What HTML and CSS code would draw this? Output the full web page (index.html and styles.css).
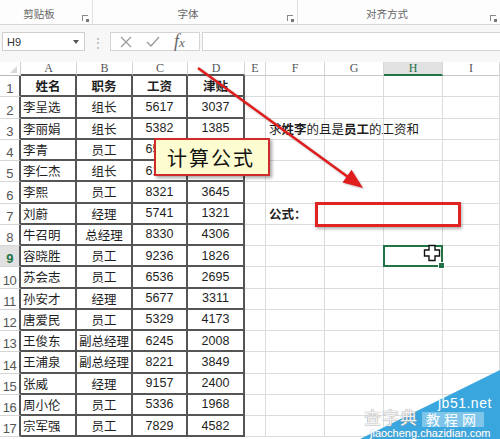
FILE: index.html
```html
<!DOCTYPE html>
<html lang="zh">
<head>
<meta charset="utf-8">
<title>Excel</title>
<link rel="stylesheet" href="styles.css">
</head>
<body>
<div class="ribbon">
  <div class="group g1">剪贴板<span class="launch"></span></div>
  <div class="group g2">字体<span class="launch"></span></div>
  <div class="group g3">对齐方式<span class="launch"></span></div>
</div>
<div class="fbar">
  <div class="namebox"><span>H9</span><span class="drop"></span></div>
  <div class="grip">⋮</div>
  <div class="fxbox">
    <svg class="ic" width="12" height="12" viewBox="0 0 12 12"><path d="M1 1L11 11M11 1L1 11" stroke="#9a9a9a" stroke-width="1.3" fill="none"/></svg>
    <svg class="ic" width="14" height="12" viewBox="0 0 14 12"><path d="M1 6L5 10L13 1" stroke="#9a9a9a" stroke-width="1.3" fill="none"/></svg>
    <span class="fx"><i>f</i><i class="x">x</i></span>
  </div>
  <div class="finput"></div>
</div>
<div class="sheet">
  <div class="corner"></div><div class="ch dk">A</div><div class="ch dk">B</div><div class="ch dk">C</div><div class="ch dk">D</div><div class="ch">E</div><div class="ch">F</div><div class="ch">G</div><div class="ch on">H</div><div class="ch">I</div>

  <div class="rh">1</div><div class="c t m b">姓名</div><div class="c t m b">职务</div><div class="c t m b">工资</div><div class="c t m b">津贴</div><div class="c"></div><div class="c"></div><div class="c"></div><div class="c"></div><div class="c"></div>
  <div class="rh">2</div><div class="c t l">李呈选</div><div class="c t m">组长</div><div class="c t m n">5617</div><div class="c t m n">3037</div><div class="c"></div><div class="c"></div><div class="c"></div><div class="c"></div><div class="c"></div>
  <div class="rh">3</div><div class="c t l">李丽娟</div><div class="c t m">组长</div><div class="c t m n">5382</div><div class="c t m n">1385</div><div class="c"></div><div class="c l note">求<b>姓李</b>的且是<b>员工</b>的工资和</div><div class="c"></div><div class="c"></div><div class="c"></div>
  <div class="rh">4</div><div class="c t l">李青</div><div class="c t m">员工</div><div class="c t m n">6514</div><div class="c t m n"></div><div class="c"></div><div class="c"></div><div class="c"></div><div class="c"></div><div class="c"></div>
  <div class="rh">5</div><div class="c t l">李仁杰</div><div class="c t m">组长</div><div class="c t m n">6108</div><div class="c t m n"></div><div class="c"></div><div class="c"></div><div class="c"></div><div class="c"></div><div class="c"></div>
  <div class="rh">6</div><div class="c t l">李熙</div><div class="c t m">员工</div><div class="c t m n">8321</div><div class="c t m n">3645</div><div class="c"></div><div class="c"></div><div class="c"></div><div class="c"></div><div class="c"></div>
  <div class="rh">7</div><div class="c t l">刘蔚</div><div class="c t m">经理</div><div class="c t m n">5741</div><div class="c t m n">1321</div><div class="c"></div><div class="c l note"><b>公式：</b></div><div class="c"></div><div class="c"></div><div class="c"></div>
  <div class="rh">8</div><div class="c t l">牛召明</div><div class="c t m">总经理</div><div class="c t m n">8330</div><div class="c t m n">4306</div><div class="c"></div><div class="c"></div><div class="c"></div><div class="c"></div><div class="c"></div>
  <div class="rh on">9</div><div class="c t l">容晓胜</div><div class="c t m">员工</div><div class="c t m n">9236</div><div class="c t m n">1826</div><div class="c"></div><div class="c"></div><div class="c"></div><div class="c sel"></div><div class="c"></div>
  <div class="rh">10</div><div class="c t l">苏会志</div><div class="c t m">员工</div><div class="c t m n">6536</div><div class="c t m n">2695</div><div class="c"></div><div class="c"></div><div class="c"></div><div class="c"></div><div class="c"></div>
  <div class="rh">11</div><div class="c t l">孙安才</div><div class="c t m">经理</div><div class="c t m n">5677</div><div class="c t m n">3311</div><div class="c"></div><div class="c"></div><div class="c"></div><div class="c"></div><div class="c"></div>
  <div class="rh">12</div><div class="c t l">唐爱民</div><div class="c t m">员工</div><div class="c t m n">5329</div><div class="c t m n">4173</div><div class="c"></div><div class="c"></div><div class="c"></div><div class="c"></div><div class="c"></div>
  <div class="rh">13</div><div class="c t l">王俊东</div><div class="c t m">副总经理</div><div class="c t m n">6245</div><div class="c t m n">2008</div><div class="c"></div><div class="c"></div><div class="c"></div><div class="c"></div><div class="c"></div>
  <div class="rh">14</div><div class="c t l">王浦泉</div><div class="c t m">副总经理</div><div class="c t m n">8221</div><div class="c t m n">3849</div><div class="c"></div><div class="c"></div><div class="c"></div><div class="c"></div><div class="c"></div>
  <div class="rh">15</div><div class="c t l">张威</div><div class="c t m">经理</div><div class="c t m n">9157</div><div class="c t m n">2400</div><div class="c"></div><div class="c"></div><div class="c"></div><div class="c"></div><div class="c"></div>
  <div class="rh">16</div><div class="c t l">周小伦</div><div class="c t m">员工</div><div class="c t m n">5336</div><div class="c t m n">1968</div><div class="c"></div><div class="c"></div><div class="c"></div><div class="c"></div><div class="c"></div>
  <div class="rh">17</div><div class="c t l">宗军强</div><div class="c t m">员工</div><div class="c t m n">7829</div><div class="c t m n">4582</div><div class="c"></div><div class="c"></div><div class="c"></div><div class="c"></div><div class="c"></div>
</div>

<div class="callout">计算公式</div>
<div class="redbox"></div>

<svg class="arrow" width="500" height="439" viewBox="0 0 500 439">
  <line x1="198" y1="68" x2="348" y2="177" stroke="#e01e1e" stroke-width="2.6"/>
  <polygon points="363,188 342.5,182.5 351.5,169.8" fill="#e01e1e"/>
</svg>

<svg class="cursor" width="18" height="18" viewBox="0 0 18 18">
  <path d="M6 1.5H12V6H16.5V12H12V16.5H6V12H1.5V6H6Z" fill="#fff" stroke="#111" stroke-width="1.4"/>
</svg>

<div class="wm">
  <svg class="wm-bg" width="140" height="69" viewBox="0 0 140 69"><polygon points="0,69 140,0 140,69" fill="#39a6de"/></svg>
  <span class="wm-site">jb51.net</span>
  <span class="wm-cn">查字典</span>
  <span class="wm-jc">教程网</span>
  <span class="wm-url">jiaocheng.chazidian.com</span>
</div>
</body>
</html>
```
FILE: styles.css
```css
* { box-sizing: border-box; margin: 0; padding: 0; }
body {
  width: 500px;
  height: 439px;
  overflow: hidden;
  position: relative;
  background: #fff;
  font-family: "Noto Sans CJK SC", "Liberation Sans", sans-serif;
  color: #222;
}

/* ribbon */
.ribbon {
  height: 25px;
  display: grid;
  grid-template-columns: 93px 205px 202px;
  background: #fdfdfd;
  border-bottom: 1px solid #d8d8d8;
}
.group {
  position: relative;
  display: flex;
  justify-content: center;
  align-items: flex-end;
  padding: 0 14px 3px 0;
  font-size: 10.5px;
  color: #666;
  border-right: 1px solid #e0e0e0;
}
.g3 { padding-right: 24px; border-right: none; }
.launch {
  position: absolute;
  right: 4px;
  bottom: 3px;
  width: 6px;
  height: 6px;
  border-left: 1px solid #888;
  border-top: 1px solid #888;
}
.launch::after {
  content: "";
  position: absolute;
  right: -1px;
  bottom: -1px;
  width: 3px;
  height: 3px;
  background: #777;
}

/* formula bar */
.fbar {
  height: 37px;
  display: flex;
  align-items: flex-start;
  padding: 7px 0 0 2px;
  background: #f7f7f7;
}
.namebox {
  width: 83px;
  height: 19px;
  background: #fff;
  border: 1px solid #cfcfcf;
  display: flex;
  align-items: center;
  justify-content: space-between;
  padding: 0 5px 0 4px;
  font-family: "Liberation Sans", sans-serif;
  font-size: 11px;
  color: #333;
}
.drop {
  width: 0;
  height: 0;
  border-left: 3.5px solid transparent;
  border-right: 3.5px solid transparent;
  border-top: 4px solid #555;
}
.grip {
  width: 25px;
  text-align: center;
  color: #aaa;
  font-size: 12px;
  line-height: 19px;
}
.fxbox {
  width: 90px;
  height: 19px;
  background: #fff;
  border: 1px solid #d4d4d4;
  display: flex;
  align-items: center;
  gap: 14px;
  padding-left: 9px;
  margin-right: 2px;
}
.fx {
  font-family: "Liberation Serif", serif;
  font-size: 18px;
  color: #666;
  line-height: 1;
  margin-top: -2px;
}
.fx .x { font-size: 13px; }
.finput {
  flex: 1;
  height: 19px;
  background: #fff;
  border: 1px solid #d4d4d4;
  border-right: none;
}

/* sheet */
.sheet {
  display: grid;
  grid-template-columns: 21px 56px 56px 55px 57px 21px 59px 59px 59px 57px;
  grid-template-rows: 14px repeat(17, 21.25px);
}
.corner {
  position: relative;
  border-right: 1px solid #cfcfcf;
  border-bottom: 1px solid #b8b8b8;
  background: #fff;
}
.corner::after {
  content: "";
  position: absolute;
  right: 3px;
  bottom: 2px;
  border-left: 7px solid transparent;
  border-bottom: 7px solid #d8d8d8;
}
.ch {
  display: flex;
  justify-content: center;
  align-items: center;
  font-family: "Liberation Serif", serif;
  font-size: 12px;
  color: #555;
  border-right: 1px solid #d6d6d6;
  border-bottom: 1px solid #c8c8c8;
}
.ch.dk { border-bottom: 2px solid #555; }
.ch.on {
  background: #e1e1e1;
  color: #217346;
  border-bottom: 2px solid #217346;
}
.rh {
  display: flex;
  justify-content: center;
  align-items: flex-end;
  padding-bottom: 0;
  font-family: "Liberation Sans", sans-serif;
  font-size: 13px;
  color: #555;
  border-right: 2px solid #555;
  border-bottom: 1px solid #d6d6d6;
  letter-spacing: -0.5px;
}
.rh.on {
  background: #e1e1e1;
  color: #217346;
  font-weight: 700;
}
.c {
  display: flex;
  align-items: center;
  white-space: nowrap;
  font-size: 12.5px;
  color: #1e1e1e;
  border-right: 1px solid #dcdcdc;
  border-bottom: 1px solid #dcdcdc;
}
.c.t {
  border-right: 2px solid #555;
  border-bottom: 2px solid #555;
}
.l { padding-left: 2px; }
.m { justify-content: center; }
.b { font-weight: 700; }
.n {
  font-family: "Liberation Sans", sans-serif;
  font-size: 12.5px;
}
.note {
  padding-left: 3px;
  font-size: 12.5px;
  overflow: visible;
}
.note b { font-weight: 700; }
.sel { position: relative; }
.sel::after {
  content: "";
  position: absolute;
  left: -1px;
  top: -1px;
  right: -1px;
  bottom: -1px;
  border: 2px solid #217346;
}
.sel::before {
  content: "";
  position: absolute;
  right: -3px;
  bottom: -3px;
  width: 5px;
  height: 5px;
  background: #217346;
  border: 1px solid #fff;
  z-index: 1;
}

/* overlays */
.callout {
  position: absolute;
  left: 154px;
  top: 138px;
  width: 116px;
  height: 38px;
  background: #fdfcd0;
  border: 2px solid #cf2b2b;
  box-shadow: 2px 2px 3px rgba(0, 0, 0, 0.35);
  display: flex;
  align-items: center;
  padding-left: 11px;
  font-size: 20px;
  letter-spacing: 2px;
  color: #111;
}
.redbox {
  position: absolute;
  left: 315px;
  top: 202px;
  width: 146px;
  height: 25px;
  border: 3px solid #e02424;
  box-shadow: 1px 2px 3px rgba(0, 0, 0, 0.3);
}
.arrow {
  position: absolute;
  left: 0;
  top: 0;
  pointer-events: none;
  filter: drop-shadow(1px 1px 1px rgba(0, 0, 0, 0.25));
}
.cursor {
  position: absolute;
  left: 423px;
  top: 244px;
}
.wm {
  position: absolute;
  left: 340px;
  top: 360px;
  width: 160px;
  height: 79px;
  color: #fff;
}
.wm-bg {
  position: absolute;
  left: 20px;
  top: 10px;
}
.wm-site {
  position: absolute;
  left: 98px;
  top: 36px;
  font-family: "Liberation Sans", sans-serif;
  font-size: 14px;
  line-height: 15px;
  letter-spacing: 0.5px;
}
.wm-cn {
  position: absolute;
  left: 24px;
  top: 47px;
  font-size: 17px;
  line-height: 20px;
  color: rgba(255, 255, 255, 0.9);
  text-shadow: 0 0 1px #999, 0 0 1px #999;
  letter-spacing: 1px;
}
.wm-jc {
  position: absolute;
  left: 82px;
  top: 52px;
  padding: 0 4px;
  font-size: 14px;
  line-height: 15px;
  background: rgba(255, 255, 255, 0.35);
  color: #fff;
  letter-spacing: 4px;
}
.wm-url {
  position: absolute;
  left: 30px;
  top: 67px;
  font-family: "Liberation Sans", sans-serif;
  font-size: 11px;
  line-height: 12px;
  color: #fff;
  text-shadow: 0 0 1px #8ab;
}
```
